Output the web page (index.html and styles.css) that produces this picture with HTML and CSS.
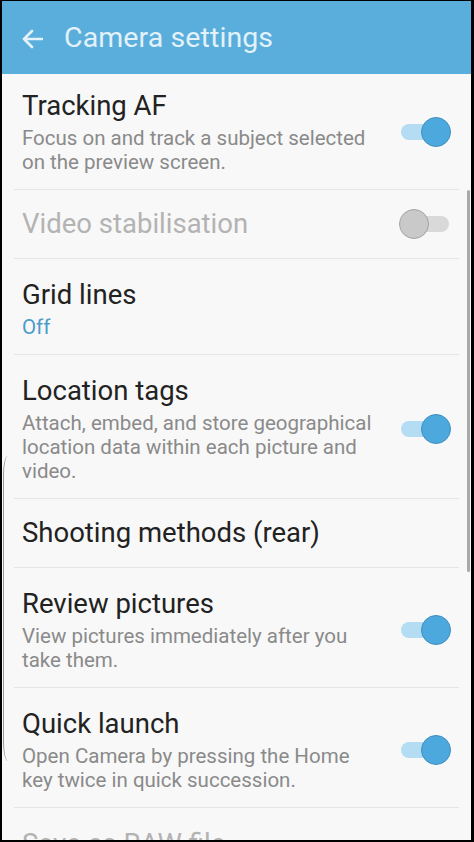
FILE: index.html
```html
<!DOCTYPE html>
<html>
<head>
<meta charset="utf-8">
<link rel="stylesheet" href="styles.css">
</head>
<body>
<div class="screen">
  <header class="appbar">
    <svg class="back" width="22" height="20" viewBox="0 0 22 20"><path d="M21 10H3M11 2L3 10l8 8" fill="none" stroke="#e4f2fb" stroke-width="2.6" stroke-linecap="round" stroke-linejoin="round"/></svg>
    <h1 class="title">Camera settings</h1>
  </header>
  <main class="list">
    <div class="row first">
      <div class="text">
        <div class="label">Tracking AF</div>
        <div class="sub">Focus on and track a subject selected on the preview screen.</div>
      </div>
      <div class="switch on"><span class="track"></span><span class="knob"></span></div>
    </div>
    <div class="row single">
      <div class="text"><div class="label disabled">Video stabilisation</div></div>
      <div class="switch off"><span class="track"></span><span class="knob"></span></div>
    </div>
    <div class="row">
      <div class="text">
        <div class="label">Grid lines</div>
        <div class="sub value">Off</div>
      </div>
    </div>
    <div class="row">
      <div class="text">
        <div class="label">Location tags</div>
        <div class="sub">Attach, embed, and store geographical location data within each picture and video.</div>
      </div>
      <div class="switch on"><span class="track"></span><span class="knob"></span></div>
    </div>
    <div class="row single">
      <div class="text"><div class="label">Shooting methods (rear)</div></div>
    </div>
    <div class="row">
      <div class="text">
        <div class="label">Review pictures</div>
        <div class="sub">View pictures immediately after you take them.</div>
      </div>
      <div class="switch on"><span class="track"></span><span class="knob"></span></div>
    </div>
    <div class="row">
      <div class="text">
        <div class="label">Quick launch</div>
        <div class="sub">Open Camera by pressing the Home key twice in quick succession.</div>
      </div>
      <div class="switch on"><span class="track"></span><span class="knob"></span></div>
    </div>
    <div class="row">
      <div class="text"><div class="label disabled">Save as RAW file</div></div>
    </div>
  </main>
  <div class="scrollbar"></div>
  <div class="edge"></div>
</div>
</body>
</html>
```
FILE: styles.css
```css
* { box-sizing: border-box; }
html, body { margin: 0; padding: 0; }
body {
  background: #000;
  width: 474px;
  height: 842px;
  overflow: hidden;
  font-family: Roboto, "Noto Sans", sans-serif;
}
.screen {
  position: relative;
  margin: 1px 3px 0 2px;
  height: 839px;
  background: #f8f8f8;
  overflow: hidden;
}
.appbar {
  height: 73px;
  background: #5aaedb;
  display: flex;
  align-items: center;
  padding-left: 19px;
}
.back { margin-top: 2px; }
.title {
  margin: 0 0 0 21px;
  font-weight: 400;
  font-size: 28.5px;
  color: #e2f1fa;
  letter-spacing: 0.1px;
}
.list { display: flex; flex-direction: column; }
.row {
  display: flex;
  align-items: center;
  padding: 19px 0 15px 8px;
  border-top: 1px solid #e5e5e5;
  margin: 0 12px;
}
.row.first { border-top: none; padding-top: 15px; }
.row.single { padding-top: 17px; padding-bottom: 17px; }
.text { flex: 1; min-width: 0; padding-right: 21px; }
.label {
  font-size: 27.5px;
  line-height: 34px;
  color: #222;
}
.label.disabled { color: #b3b3b3; }
.sub {
  margin-top: 3px;
  font-size: 20.5px;
  line-height: 24px;
  color: #8a8a8a;
}
.sub.value { color: #4c9bc9; }
.switch {
  position: relative;
  width: 52px;
  height: 30px;
  flex: none;
  margin-right: 8px;
}
.switch .track {
  position: absolute;
  left: 2px; right: 2px; top: 7px;
  height: 16px;
  border-radius: 8px;
}
.switch .knob {
  position: absolute;
  top: 0;
  width: 30px; height: 30px;
  border-radius: 50%;
}
.switch.on .track { background: #b4dcf2; }
.switch.on .knob { right: 0; background: #4da8dd; border: 1px solid #3f8fbf; }
.switch.off .track { background: #d9d9d9; }
.switch.off .knob { left: 0; background: #c9c9c9; border: 1px solid #a3a3a3; }
.scrollbar {
  position: absolute;
  left: 465px; top: 189px;
  width: 3px; height: 382px;
  background: #a9a9a9;
  border-radius: 2px;
}
.edge {
  position: absolute;
  left: 1px; top: 455px;
  width: 10px; height: 305px;
  border-left: 1px solid #9a9a9a;
  border-radius: 8px / 30px;
}
```
